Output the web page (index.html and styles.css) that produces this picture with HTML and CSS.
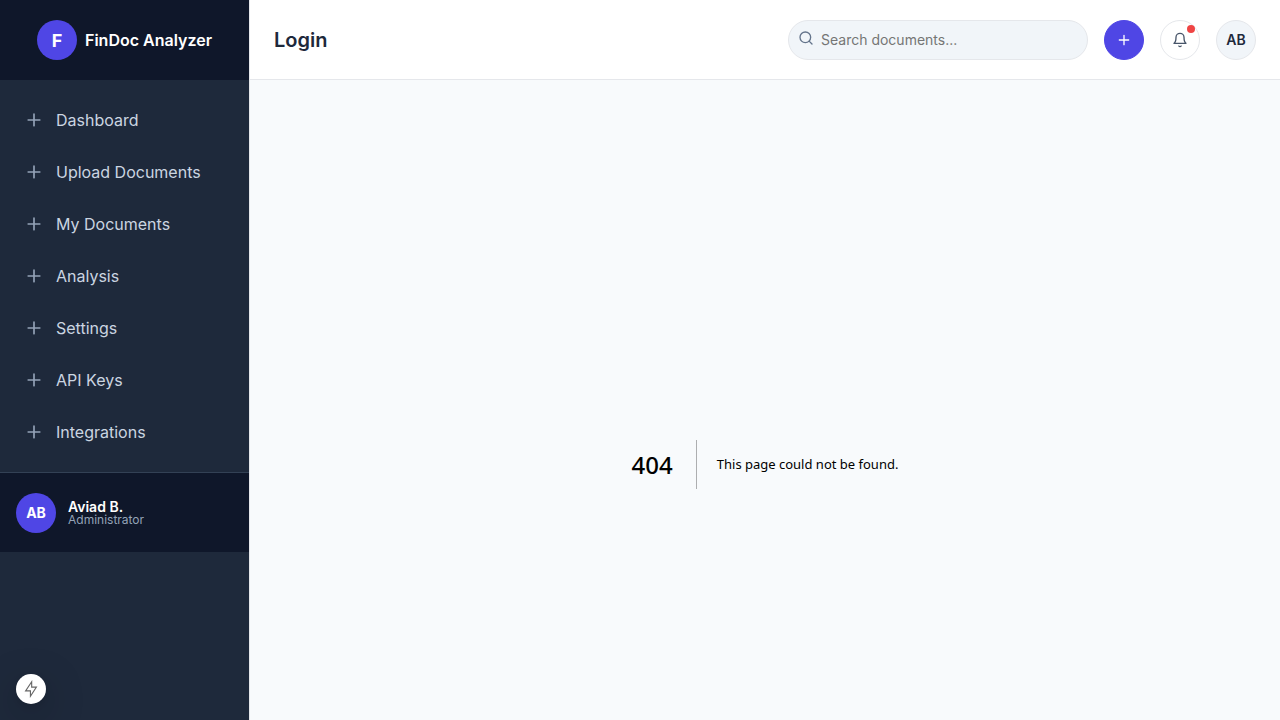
FILE: index.html
```html
<!DOCTYPE html>
<html lang="en">
<head>
<meta charset="utf-8">
<meta name="viewport" content="width=device-width, initial-scale=1">
<title>FinDoc Analyzer</title>
<link rel="stylesheet" href="styles.css">
</head>
<body>
<svg class="sprite" aria-hidden="true">
  <symbol id="plus" viewBox="0 0 24 24"><path d="M12 5v14M5 12h14"/></symbol>
</svg>
<div class="app">
  <aside class="sidebar">
    <div class="brand">
      <span class="avatar brand-mark">F</span>
      <span class="brand-name">FinDoc Analyzer</span>
    </div>
    <nav class="nav">
      <a class="nav-link" href="#"><svg class="icon"><use href="#plus"/></svg>Dashboard</a>
      <a class="nav-link" href="#"><svg class="icon"><use href="#plus"/></svg>Upload Documents</a>
      <a class="nav-link" href="#"><svg class="icon"><use href="#plus"/></svg>My Documents</a>
      <a class="nav-link" href="#"><svg class="icon"><use href="#plus"/></svg>Analysis</a>
      <a class="nav-link" href="#"><svg class="icon"><use href="#plus"/></svg>Settings</a>
      <a class="nav-link" href="#"><svg class="icon"><use href="#plus"/></svg>API Keys</a>
      <a class="nav-link" href="#"><svg class="icon"><use href="#plus"/></svg>Integrations</a>
    </nav>
    <div class="profile">
      <span class="avatar">AB</span>
      <div class="profile-text">
        <div class="profile-name">Aviad B.</div>
        <div class="profile-role">Administrator</div>
      </div>
    </div>
  </aside>
  <div class="page">
    <header class="topbar">
      <h1 class="title">Login</h1>
      <div class="actions">
        <label class="search">
          <svg class="search-icon" viewBox="0 0 24 24" aria-hidden="true"><circle cx="11" cy="11" r="8"/><path d="M21 21l-4.35-4.35"/></svg>
          <input class="search-input" type="text" placeholder="Search documents..." aria-label="Search documents">
        </label>
        <button class="round round-primary" type="button" aria-label="Add"><svg class="small-icon"><use href="#plus"/></svg></button>
        <button class="round round-plain" type="button" aria-label="Notifications">
          <svg class="small-icon" viewBox="0 0 24 24"><path d="M18 8A6 6 0 006 8c0 7-3 9-3 9h18s-3-2-3-9M13.73 21a2 2 0 01-3.46 0"/></svg>
          <span class="dot"></span>
        </button>
        <button class="round round-user" type="button">AB</button>
      </div>
    </header>
    <main class="content">
      <div class="error">
        <h2 class="error-code">404</h2>
        <p class="error-text">This page could not be found.</p>
      </div>
    </main>
  </div>
</div>
<button class="dev-badge" type="button" aria-label="Developer tools">
  <svg class="bolt" viewBox="0 0 16 16"><path d="M8.6 1.6v4.7h4.2L7.5 14.4V9.7H3.2z"/></svg>
</button>
</body>
</html>
```
FILE: styles.css
```css
* { box-sizing: border-box; }
body {
  margin: 0;
  font-family: Inter, "Liberation Sans", sans-serif;
  font-size: 16px;
  color: #1e293b;
  background: #f8fafc;
}
svg { fill: none; stroke: currentColor; stroke-linecap: round; stroke-linejoin: round; }
.sprite { position: absolute; width: 0; height: 0; }
.app { display: flex; height: 100vh; overflow: hidden; }
.sidebar {
  flex: none;
  width: 250px;
  background: #1e293b;
  border-right: 1px solid #e5e7eb;
}
.brand {
  display: flex;
  align-items: center;
  justify-content: center;
  gap: 8px;
  height: 80px;
  background: #0f172a;
  color: #fff;
  font-weight: 600;
}
.avatar {
  display: flex;
  align-items: center;
  justify-content: center;
  flex: none;
  width: 40px;
  height: 40px;
  border-radius: 50%;
  background: #4f46e5;
  color: #fff;
  font-size: 14px;
  font-weight: 700;
}
.brand-mark { font-size: 18px; }
.nav { display: flex; flex-direction: column; gap: 4px; padding: 16px 8px; }
.nav-link {
  display: flex;
  align-items: center;
  gap: 12px;
  height: 48px;
  padding: 0 16px;
  color: #cbd5e1;
  text-decoration: none;
}
.icon { width: 20px; height: 20px; color: #94a3b8; stroke-width: 2; }
.profile {
  display: flex;
  align-items: center;
  gap: 12px;
  height: 80px;
  padding: 0 16px;
  border-top: 1px solid #334155;
  background: #0f172a;
}
.profile-name { color: #fff; font-size: 14px; line-height: 14px; font-weight: 600; }
.profile-role { color: #94a3b8; font-size: 12px; line-height: 12px; }
.page { flex: 1; min-width: 0; }
.topbar {
  display: flex;
  align-items: center;
  justify-content: space-between;
  height: 80px;
  padding: 0 24px;
  background: #fff;
  border-bottom: 1px solid #e5e7eb;
}
.title { margin: 0; font-size: 20px; font-weight: 600; }
.actions { display: flex; align-items: center; gap: 16px; }
.search { position: relative; }
.search-icon {
  position: absolute;
  left: 10px;
  top: 10px;
  width: 16px;
  height: 16px;
  stroke-width: 2;
  color: #64748b;
}
.search-input {
  display: block;
  width: 300px;
  height: 40px;
  padding: 0 16px 0 32px;
  border: 1px solid #e5e7eb;
  border-radius: 20px;
  background: #f1f5f9;
  font-family: inherit;
  font-size: 14px;
}
.search-input::placeholder { color: #757575; }
.round {
  position: relative;
  display: flex;
  align-items: center;
  justify-content: center;
  width: 40px;
  height: 40px;
  padding: 0;
  border: 1px solid #e5e7eb;
  border-radius: 50%;
  font: 600 14px Inter, "Liberation Sans", sans-serif;
  color: #1e293b;
}
.round-primary { background: #4f46e5; border-color: #4f46e5; color: #fff; }
.round-plain { background: #fff; color: #475569; }
.round-user { background: #f1f5f9; }
.small-icon { width: 16px; height: 16px; stroke-width: 2; }
.dot {
  position: absolute;
  top: 4px;
  right: 4px;
  width: 8px;
  height: 8px;
  border-radius: 50%;
  background: #ef4444;
}
.content { padding: 24px; }
.error {
  display: flex;
  align-items: center;
  justify-content: center;
  height: 100vh;
  color: #000;
  font-family: "Noto Sans", "Open Sans", sans-serif;
}
.error-code {
  margin: 0 20px 0 0;
  padding-right: 23px;
  border-right: 1px solid rgba(0, 0, 0, 0.3);
  font-size: 24px;
  line-height: 49px;
  font-weight: 500;
}
.error-text { margin: 0; font-size: 13px; line-height: 28px; }
.dev-badge {
  position: fixed;
  left: 16px;
  bottom: 16px;
  display: flex;
  align-items: center;
  justify-content: center;
  width: 30px;
  height: 30px;
  padding: 0;
  border: 0;
  border-radius: 50%;
  background: #fff;
  color: #666;
  box-shadow: 0 11px 40px rgba(0, 0, 0, 0.25), 0 2px 10px rgba(0, 0, 0, 0.12);
}
.bolt { width: 18px; height: 18px; stroke-width: 1; stroke-linejoin: miter; }
```
